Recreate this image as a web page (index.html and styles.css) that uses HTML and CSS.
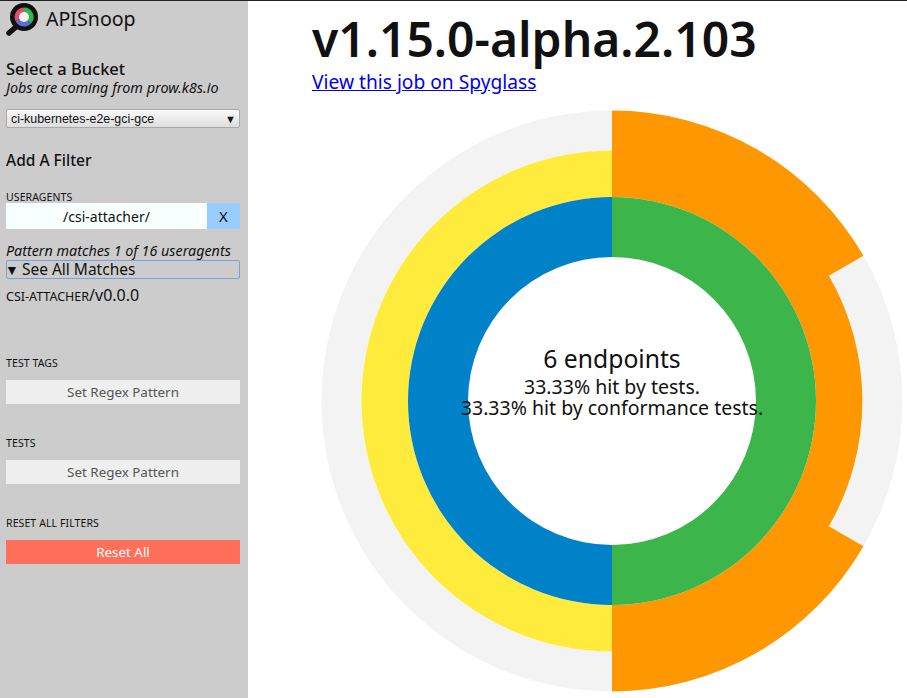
FILE: index.html
```html
<!DOCTYPE html>
<html lang="en">
  <head>
    <meta charset="UTF-8" />
    <title>APISnoop</title>
    <link rel="stylesheet" href="styles.css">
  </head>
  <body>
    <aside class="sidebar">
      <div class="brand">
        <svg class="logo" width="34" height="36" viewBox="0 0 34 36">
          <path d="M11 23 L3 30" stroke="#111" stroke-width="5.500" stroke-linecap="round" fill="none" />
          <circle cx="18" cy="14" r="14" fill="#111" />
          <path d="M18 14 L18 4.500 A9.500 9.500 0 0 1 25 20.500 Z" fill="#2eb84f" />
          <path d="M18 14 L25 20.500 A9.500 9.500 0 0 1 9.500 18 Z" fill="#5670d6" />
          <path d="M18 14 L9.500 18 A9.500 9.500 0 0 1 18 4.500 Z" fill="#e2506c" />
          <circle cx="18" cy="14" r="5" fill="#f2f2f2" />
        </svg>
        <span class="brand-name">APISnoop</span>
      </div>

      <h3 class="bucket-title">Select a Bucket</h3>
      <em class="bucket-note">Jobs are coming from prow.k8s.io</em>
      <div class="select">
        <span>ci-kubernetes-e2e-gci-gce</span>
        <span class="select-arrow">▼</span>
      </div>

      <h3 class="filter-title">Add A Filter</h3>

      <p class="label label-agents">useragents</p>
      <div class="regex">
        <span class="regex-input">/csi-attacher/</span>
        <span class="regex-clear">X</span>
      </div>
      <em class="matches-note">Pattern matches 1 of 16 useragents</em>
      <div class="summary"><span class="summary-arrow">▼</span> See All Matches</div>
      <p class="match"><span class="match-name">csi-attacher</span>/v0.0.0</p>

      <p class="label label-tags">test tags</p>
      <div class="button">Set Regex Pattern</div>

      <p class="label label-tests">tests</p>
      <div class="button">Set Regex Pattern</div>

      <p class="label label-tests">reset all filters</p>
      <div class="button button-reset">Reset All</div>
    </aside>

    <main class="content">
      <h1>v1.15.0-alpha.2.103</h1>
      <a class="job-link" href="#">View this job on Spyglass</a>
      <svg class="sunburst" width="582" height="582" viewBox="-291 -291 582 582">
        <!-- outer ring -->
        <path d="M0 -290.500 A290.500 290.500 0 0 0 0 290.500 L0 250.500 A250.500 250.500 0 0 1 0 -250.500 Z" fill="#f3f3f3" />
        <path d="M251.500 -145.200 A290.500 290.500 0 0 1 251.500 145.200 L216.900 125.200 A250.500 250.500 0 0 0 216.900 -125.200 Z" fill="#f3f3f3" />
        <path d="M0 -290.500 A290.500 290.500 0 0 1 251.500 -145.200 L216.900 -125.200 A250.500 250.500 0 0 1 216.900 125.200 L251.500 145.200 A290.500 290.500 0 0 1 0 290.500 L0 204 A204 204 0 0 0 0 -204 Z" fill="#ff9800" />
        <!-- middle ring -->
        <path d="M0 -250.500 A250.500 250.500 0 0 0 0 250.500 L0 204 A204 204 0 0 1 0 -204 Z" fill="#ffeb3b" />
        <!-- inner ring -->
        <path d="M0 -204 A204 204 0 0 0 0 204 L0 144 A144 144 0 0 1 0 -144 Z" fill="#0082c8" />
        <path d="M0 -204 A204 204 0 0 1 0 204 L0 144 A144 144 0 0 0 0 -144 Z" fill="#3cb54b" />
        <text class="chart-title" x="0" y="-33">6 endpoints</text>
        <text class="chart-line" x="0" y="-7">33.33% hit by tests.</text>
        <text class="chart-line" x="0" y="14">33.33% hit by conformance tests.</text>
      </svg>
    </main>
  </body>
</html>
```

FILE: styles.css
```css
html,
body {
  height: 100%;
}

body {
  font-family: "Noto Sans", sans-serif;
  margin: 0;
  box-sizing: border-box;
  border-top: 1px solid #222;
  display: grid;
  grid-template-columns: 248px 1fr;
  overflow: hidden;
  color: #111;
  background: white;
}

.sidebar {
  background: #ccc;
  padding: 0 8px 0 6px;
  display: flex;
  flex-direction: column;
  align-items: stretch;
}

.brand {
  display: flex;
  align-items: flex-start;
  gap: 6px;
  height: 36px;
  margin-top: 2px;
}

.brand-name {
  font-size: 19.600px;
  line-height: 32px;
}

.bucket-title,
.filter-title {
  font-weight: 500;
  line-height: 20px;
  margin: 0;
}

.bucket-title {
  font-size: 16.500px;
  margin-top: 20px;
}

.bucket-note {
  font-size: 14.400px;
  line-height: 18px;
}

.select {
  margin-top: 12px;
  box-sizing: border-box;
  height: 19px;
  display: flex;
  align-items: center;
  justify-content: space-between;
  padding: 0 3px 0 4px;
  font-family: "Liberation Sans", sans-serif;
  font-size: 12.400px;
  background: linear-gradient(#fafafa, #ddd);
  border: 1px solid #aaa;
  border-radius: 2px;
}

.select-arrow {
  font-size: 11px;
}

.filter-title {
  font-size: 15.500px;
  margin-top: 22px;
}

.label {
  font-size: 10.500px;
  line-height: 12px;
  margin: 0;
  text-transform: uppercase;
  letter-spacing: 0.1px;
}

.label-agents {
  margin-top: 21px;
}

.label-tags {
  margin-top: 50px;
}

.label-tests {
  margin-top: 33px;
}

.regex {
  display: flex;
  height: 26px;
  font-size: 14px;
}

.regex-input {
  flex: 1;
  background: #f7ffff;
  display: flex;
  align-items: center;
  justify-content: center;
}

.regex-clear {
  width: 33px;
  background: #99ccff;
  font-size: 15px;
  display: flex;
  align-items: center;
  justify-content: center;
}

.matches-note {
  font-size: 14.300px;
  line-height: 18px;
  margin-top: 13px;
}

.summary {
  font-size: 15.500px;
  line-height: 17px;
  height: 17px;
  border: 1px solid #7f9fdc;
  border-radius: 2px;
  white-space: nowrap;
}

.summary-arrow {
  font-size: 14px;
  margin: 0 -1px 0 -2px;
}

.match {
  margin: 6px 0 0;
  font-size: 16px;
  line-height: 20px;
}

.match-name {
  font-size: 12.500px;
  text-transform: uppercase;
}

.button {
  margin-top: 11px;
  height: 24px;
  background: #eee;
  color: #555;
  font-size: 13.400px;
  display: flex;
  align-items: center;
  justify-content: center;
}

.button-reset {
  background: #ff705a;
  color: white;
}

.content {
  display: flex;
  flex-direction: column;
  align-items: flex-start;
  padding-left: 64px;
  min-width: 0;
}

h1 {
  font-size: 48px;
  font-weight: 600;
  line-height: 56px;
  margin: 10px 0 0;
  white-space: nowrap;
}

.job-link {
  font-size: 19.200px;
  line-height: 24px;
  margin-top: 3px;
  color: #0000ee;
}

.sunburst {
  margin: 16px 0 0 9px;
  flex: none;
}

.chart-title,
.chart-line {
  text-anchor: middle;
  fill: #111;
}

.chart-title {
  font-size: 24.700px;
}

.chart-line {
  font-size: 19.500px;
}
```
